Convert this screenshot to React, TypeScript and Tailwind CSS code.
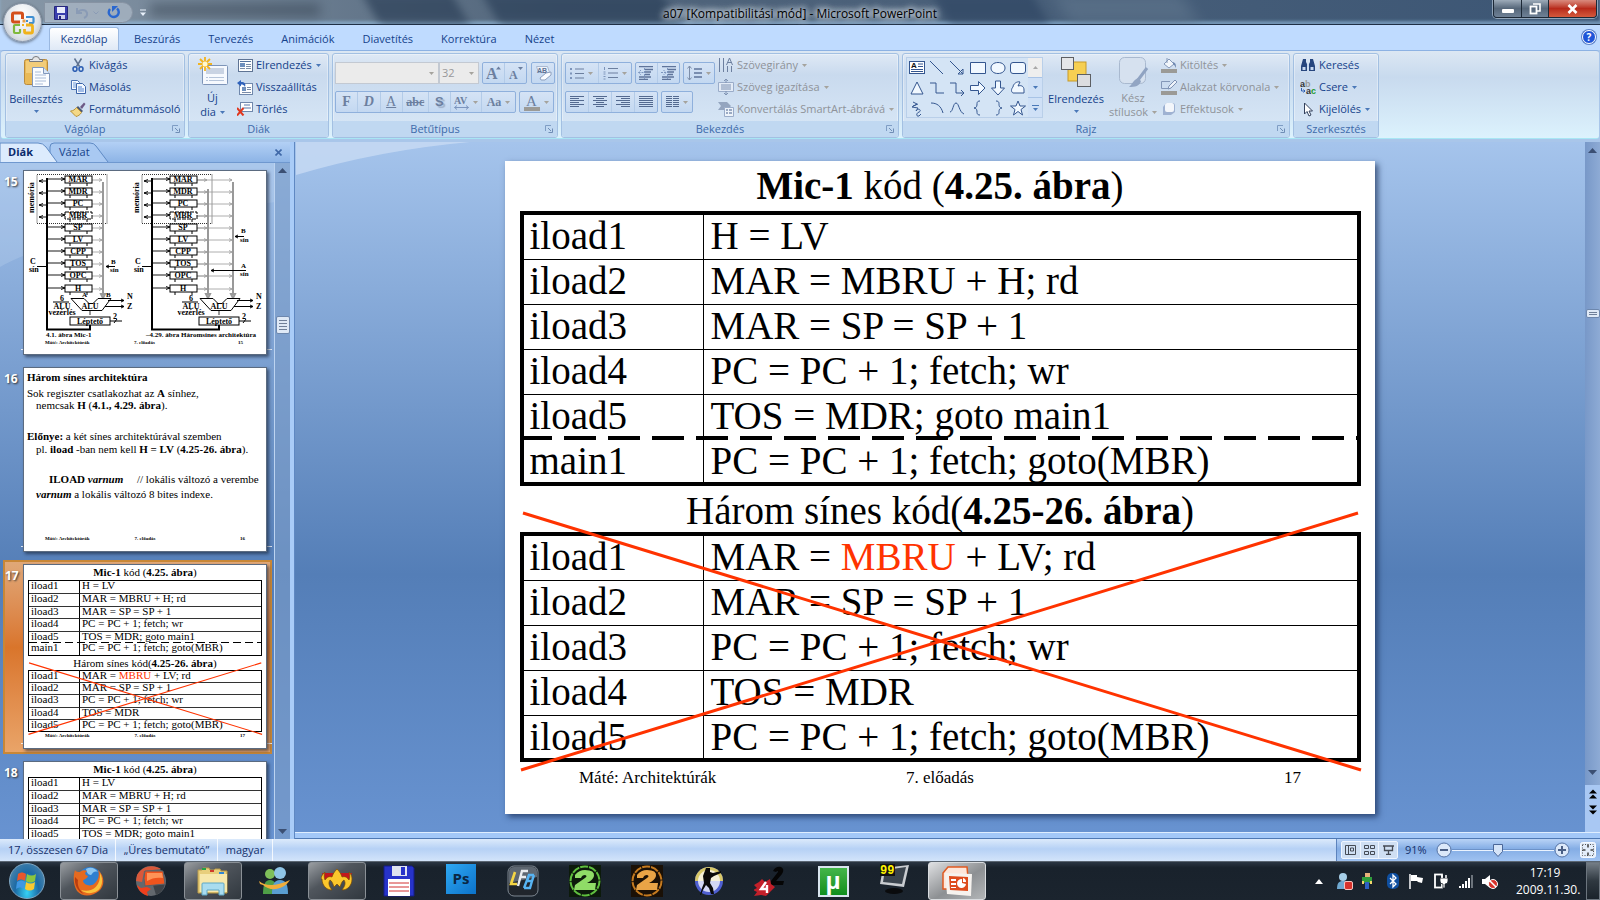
import type { ReactNode } from 'react';

const tabs = ['Beszúrás', 'Tervezés', 'Animációk', 'Diavetítés', 'Korrektúra', 'Nézet'];

const mic1Rows = [
  ['iload1', 'H = LV'],
  ['iload2', 'MAR = MBRU + H; rd'],
  ['iload3', 'MAR = SP = SP + 1'],
  ['iload4', 'PC = PC + 1; fetch; wr'],
  ['iload5', 'TOS = MDR; goto main1'],
  ['main1', 'PC = PC + 1; fetch; goto(MBR)'],
];

const busRows = [
  ['iload1', 'MAR = MBRU + LV; rd'],
  ['iload2', 'MAR = SP = SP + 1'],
  ['iload3', 'PC = PC + 1; fetch; wr'],
  ['iload4', 'TOS = MDR'],
  ['iload5', 'PC = PC + 1; fetch; goto(MBR)'],
];

function Icon({ w = 16, h = 16, children, className = '' }: { w?: number; h?: number; children: ReactNode; className?: string }) {
  return (
    <svg width={w} height={h} viewBox={`0 0 ${w} ${h}`} fill="none" className={`shrink-0 ${className}`} aria-hidden="true">
      {children}
    </svg>
  );
}

function Arrow({ off }: { off?: boolean }) {
  return (
    <Icon w={5} h={3}>
      <path d="M0 0h5L2.5 3z" fill={off ? '#a5a39d' : '#4a78b8'} />
    </Icon>
  );
}

/* ---------- ribbon building blocks ---------- */

function Group({ title, width, launcher, children }: { title: string; width: string; launcher?: boolean; children: ReactNode }) {
  return (
    <section
      aria-label={title}
      className={`${width} shrink-0 h-[85px] flex flex-col rounded-[3px] border border-[#a3c0e2] bg-linear-to-b from-[#dfe9f5] from-0% via-[#c9daee] via-25% to-[#d9e8f7] shadow-[inset_0_0_0_1px_rgba(255,255,255,0.35)] overflow-hidden`}
    >
      <div className="flex-1 min-h-0 flex">{children}</div>
      <div className={`h-4 bg-[#c0d8f1] flex items-center justify-center relative text-[#3e6aaa] ${launcher ? 'pr-5' : ''}`}>
        <span>{title}</span>
        {launcher && (
          <button aria-label={`${title} beállításai`} className="absolute right-1 top-1">
            <Icon w={8} h={8}>
              <path d="M0.5 6V0.5H6" stroke="#7f9dc4" />
              <path d="M3 3l3 3M7.500 3.500v4h-4" stroke="#6f8db5" />
            </Icon>
          </button>
        )}
      </div>
    </section>
  );
}

function Small({ icon, label, arrow, off }: { icon: ReactNode; label: string; arrow?: boolean; off?: boolean }) {
  return (
    <button className={`h-[22px] flex items-center gap-[3px] whitespace-nowrap ${off ? 'text-[#8f9399]' : 'text-[#15428b]'}`}>
      <span className="w-4 flex justify-center">{icon}</span>
      <span className="mr-px">{label}</span>
      {arrow && <Arrow off={off} />}
    </button>
  );
}

function Column({ children, className = '' }: { children: ReactNode; className?: string }) {
  return <div className={`flex flex-col items-start ${className}`}>{children}</div>;
}

function Box({ children, className = '' }: { children: ReactNode; className?: string }) {
  return (
    <div className={`h-[22px] flex items-stretch rounded-[2px] border border-[#8fb0dc] bg-linear-to-b from-[#d5e3f5] to-[#c3d8f1] divide-x divide-[#b3cbe8] ${className}`}>
      {children}
    </div>
  );
}

function Tool({ label, children, className = 'flex-1' }: { label: string; children: ReactNode; className?: string }) {
  return (
    <button aria-label={label} className={`flex items-center justify-center gap-1 text-[#6c7f9f] ${className}`}>
      {children}
    </button>
  );
}

function Lines({ rows, w = 14, color = '#53698f' }: { rows: [number, number][]; w?: number; color?: string }) {
  return (
    <Icon w={w} h={12}>
      {rows.map(([x, len], i) => (
        <path key={i} d={`M${x} ${i * 2 + 0.5}h${len}`} stroke={color} />
      ))}
    </Icon>
  );
}

function ClipboardGroup() {
  return (
    <Group title="Vágólap" width="w-[180px]" launcher>
      <button className="w-[60px] pt-[2px] flex flex-col items-center text-[#15428b]">
        <Icon w={28} h={32}>
          <rect x="2.500" y="3.500" width="23" height="25" rx="2" fill="#e9b957" stroke="#b98a3c" />
          <path d="M4 5h20v12H4z" fill="#f5d488" opacity=".7" />
          <path d="M7.500 5.500V3.500h3a3.500 3 0 0 1 7 0h3v2z" fill="#e6e6e6" stroke="#77797d" />
          <path d="M10.500 11.500h11l6 6v13h-17z" fill="#fbfdff" stroke="#8198bd" />
          <path d="M21.500 11.500v6h6" fill="#dbe7f6" stroke="#8198bd" />
          <path d="M13 16h6M13 19h11M13 22h11M13 25h11M13 28h8" stroke="#a9bcd8" />
        </Icon>
        <span className="mt-1 leading-[14px]">Beillesztés</span>
        <span className="mt-1"><Arrow /></span>
      </button>
      <Column className="ml-1">
        <Small
          label="Kivágás"
          icon={
            <Icon w={12} h={14}>
              <path d="M2.500 0.500l5 8M9.500 0.500l-5 8" stroke="#5f7391" strokeWidth="1.500" />
              <ellipse cx="3" cy="11" rx="2" ry="2.300" stroke="#2e5fb3" strokeWidth="1.600" />
              <ellipse cx="9" cy="11" rx="2" ry="2.300" stroke="#2e5fb3" strokeWidth="1.600" />
            </Icon>
          }
        />
        <Small
          label="Másolás"
          icon={
            <Icon w={16} h={14}>
              <path d="M1.500 0.500h6l2 2v7h-8z" fill="#f4f9ff" stroke="#4b73b5" />
              <path d="M3 3h3M3 5h5M3 7h5" stroke="#6f98d8" />
              <path d="M6.500 3.500h6l3 3v7h-9z" fill="#f4f9ff" stroke="#3a63a8" />
              <path d="M8 7h4M8 9h6M8 11h6" stroke="#4f80cf" />
            </Icon>
          }
        />
        <Small
          label="Formátummásoló"
          icon={
            <Icon w={16} h={15}>
              <path d="M10 5l4-4.500 1.500 1.500-3.500 5z" fill="#6d5a86" />
              <path d="M8 4l5 5-1.500 1.500-5-5z" fill="#4c5a78" />
              <path d="M6.500 5.500l5 5C10 13 8 14 6 14.500L0.500 9C3 9 5 7.500 6.500 5.500z" fill="#f4d886" stroke="#b89239" />
            </Icon>
          }
        />
      </Column>
    </Group>
  );
}

function SlidesGroup() {
  return (
    <Group title="Diák" width="w-[141px]">
      <button className="ml-px w-[45px] pt-[2px] flex flex-col items-center text-[#15428b]">
        <Icon w={32} h={32}>
          <rect x="5.500" y="9.500" width="25" height="19" rx="1" fill="#f6f9fe" stroke="#7d94b8" />
          <rect x="9" y="12" width="18" height="6" fill="#c9d3e3" />
          <path d="M9 21.500h18M9 24.500h18" stroke="#b5c4da" strokeDasharray="2 1 15 0" />
          <path d="M8 1v14M1 8h14M3 3l10 10M13 3L3 13" stroke="#f2b31f" strokeWidth="1.800" />
          <circle cx="8" cy="8" r="2.500" fill="#fff8cf" />
        </Icon>
        <span className="mt-[3px] leading-[14px]">Új</span>
        <span className="leading-[14px] flex items-center gap-1">dia <Arrow /></span>
      </button>
      <Column className="ml-[2px]">
        <Small
          label="Elrendezés"
          arrow
          icon={
            <Icon w={15} h={13}>
              <rect x=".5" y=".5" width="14" height="12" fill="#fdfeff" stroke="#5f7494" />
              <path d="M2 2.500h11" stroke="#54729f" />
              <rect x="2" y="4" width="5" height="4" fill="#6e8fbd" />
              <path d="M8 5.500h5M8 7.500h5M2 9.500h5M8 9.500h5" stroke="#7a8ca8" />
            </Icon>
          }
        />
        <Small
          label="Visszaállítás"
          icon={
            <Icon w={16} h={15}>
              <rect x="2.500" y="3.500" width="13" height="11" fill="#fdfeff" stroke="#7088ac" />
              <rect x="5" y="7" width="4" height="4" fill="#6e8fbd" />
              <path d="M10 7.500h4M10 9.500h4M5 12.500h9" stroke="#7a8ca8" />
              <path d="M0 3l4-3v2c4 0 5 2 4 5-1-2-2-2.500-4-2.500V6.500z" fill="#2f62bb" />
            </Icon>
          }
        />
        <Small
          label="Törlés"
          icon={
            <Icon w={16} h={14}>
              <rect x="3.500" y=".5" width="12" height="9" fill="#fdfeff" stroke="#7088ac" />
              <path d="M7 3h6M6 6h8" stroke="#8fa4c6" strokeWidth="1.500" />
              <path d="M0 6l6.500 7.500M6.500 6L0 13.500" stroke="#e0371e" strokeWidth="2" />
            </Icon>
          }
        />
      </Column>
    </Group>
  );
}

function FontGroup() {
  return (
    <Group title="Betűtípus" width="w-[226px]" launcher>
      <div className="flex flex-col pl-[2px] pt-2 gap-[7px] w-full">
        <div className="flex">
          <div className="w-[104px] h-[22px] bg-[#ebebeb] border border-[#c3c9d2] flex items-center">
            <input aria-label="Betűtípus neve" className="w-full min-w-0 bg-transparent" />
            <span className="mr-1"><Arrow off /></span>
          </div>
          <div className="w-10 h-[22px] bg-[#ebebeb] border border-[#c3c9d2] flex items-center">
            <input aria-label="Betűméret" defaultValue="32" className="w-full min-w-0 bg-transparent pl-[2px] text-[#98989a]" />
            <span className="mr-1"><Arrow off /></span>
          </div>
          <Box className="ml-[3px] w-[45px]">
            <Tool label="Betűméret növelése">
              <Icon w={16} h={16}>
                <text x="0" y="14" fontSize="16" fontWeight="700" fill="#6c7f9f" fontFamily="Liberation Serif">A</text>
                <path d="M10 4.500h5l-2.500-3z" fill="#6c7f9f" />
              </Icon>
            </Tool>
            <Tool label="Betűméret csökkentése">
              <Icon w={14} h={16}>
                <text x="0" y="14" fontSize="12" fontWeight="700" fill="#6c7f9f" fontFamily="Liberation Serif">A</text>
                <path d="M9 2h5l-2.500 3z" fill="#6c7f9f" />
              </Icon>
            </Tool>
          </Box>
          <Box className="ml-1 w-6">
            <Tool label="Formázás törlése">
              <Icon w={17} h={16}>
                <path d="M1.500 1.500h11l2 6h-11z" fill="#eef3fa" stroke="#a9b9d2" />
                <text x="2" y="8" fontSize="7" fontWeight="700" fill="#5d7192" fontFamily="Liberation Sans">AB</text>
                <path d="M5 13l6-5 5-1v3l-6 5H6z" fill="#fafcff" stroke="#8c9fbe" />
              </Icon>
            </Tool>
          </Box>
        </div>
        <div className="flex font-['Liberation_Serif',serif] text-[14px]">
          <Box className="w-[181px]">
            <Tool label="Félkövér"><b>F</b></Tool>
            <Tool label="Dőlt"><i className="font-bold">D</i></Tool>
            <Tool label="Aláhúzott"><u>A</u></Tool>
            <Tool label="Áthúzott" className="w-[26px]"><s className="text-[12px] font-bold">abc</s></Tool>
            <Tool label="Árnyék"><b className="font-['Liberation_Sans',sans-serif] text-[13px] [text-shadow:2px_2px_1px_#9fb0ca]">S</b></Tool>
            <Tool label="Betűköz" className="w-[31px]">
              <Icon w={15} h={15}>
                <text x="0" y="9" fontSize="10" fontWeight="700" fill="#6c7f9f" fontFamily="Liberation Serif">AV</text>
                <path d="M0.500 12.500h14M3 10.500l-2.500 2 2.500 2M12 10.500l2.500 2-2.500 2" stroke="#7d96bf" />
              </Icon>
              <Arrow off />
            </Tool>
            <Tool label="Kis- és nagybetű" className="w-[33px]"><b className="text-[12px]">Aa</b><Arrow off /></Tool>
          </Box>
          <Box className="ml-[3px] w-[35px]">
            <Tool label="Betűszín">
              <Icon w={16} h={17}>
                <text x="2" y="12" fontSize="15" fill="#6c7f9f" fontFamily="Liberation Serif">A</text>
                <rect y="13" width="16" height="4" fill="#9b9a96" />
              </Icon>
              <Arrow off />
            </Tool>
          </Box>
        </div>
      </div>
    </Group>
  );
}

function ParagraphGroup() {
  const full: [number, number][] = [[0, 14], [0, 14], [0, 14], [0, 14], [0, 14], [0, 14]];
  return (
    <Group title="Bekezdés" width="w-[338px]" launcher>
      <div className="flex flex-col pl-[3px] pt-2 gap-[7px] w-[153px]">
        <div className="flex gap-[3px]">
          <Box className="w-[67px]">
            <Tool label="Felsorolás">
              <Icon w={14} h={13}>
                <path d="M5 2h9M5 6.500h9M5 11h9" stroke="#6c7f9f" />
                <path d="M0 2h2M0 6.500h2M0 11h2" stroke="#7d94ba" strokeWidth="2" />
              </Icon>
              <Arrow off />
            </Tool>
            <Tool label="Számozás">
              <Icon w={15} h={14}>
                <path d="M5 2.500h10M5 7h10M5 11.500h10" stroke="#6c7f9f" />
                <path d="M1.500 1v3M0.500 6h2M0.500 8h2M0.500 10.500h2M0.500 13h2" stroke="#7d94ba" />
              </Icon>
              <Arrow off />
            </Tool>
          </Box>
          <Box className="w-[46px]">
            <Tool label="Behúzás csökkentése">
              <Icon w={16} h={14}>
                <path d="M1 .5h14M7 3.500h8M7 6h6M7 8.500h5M1 11h12M1 13.500h9" stroke="#5f749a" strokeWidth="1.300" />
                <path d="M5.500 6.500h-5M3 4L.5 6.500 3 9M6.500 2v12" stroke="#7d96bf" strokeDasharray="2 1" />
              </Icon>
            </Tool>
            <Tool label="Behúzás növelése">
              <Icon w={16} h={14}>
                <path d="M1 .5h14M7 3.500h8M7 6h6M7 8.500h5M1 11h12M1 13.500h9" stroke="#5f749a" strokeWidth="1.300" />
                <path d="M0 6.500h5M2.500 4L5 6.500 2.500 9M6.500 2v12" stroke="#7d96bf" strokeDasharray="2 1" />
              </Icon>
            </Tool>
          </Box>
          <Box className="w-8">
            <Tool label="Sorköz">
              <Icon w={15} h={16}>
                <path d="M2.500 1v14M.5 3.500L2.500 1l2 2.500M.5 12.500L2.500 15l2-2.500" stroke="#7d8ea9" />
                <path d="M7 4h8M7 8h8M7 12h8" stroke="#5f749a" strokeWidth="1.300" />
              </Icon>
              <Arrow off />
            </Tool>
          </Box>
        </div>
        <div className="flex gap-[3px]">
          <Box className="w-[93px]">
            <Tool label="Balra zárás"><Lines rows={[[0, 14], [0, 9], [0, 14], [0, 9], [0, 14], [0, 9]]} /></Tool>
            <Tool label="Középre zárás"><Lines rows={[[0, 14], [3, 8], [0, 14], [3, 8], [0, 14], [3, 8]]} /></Tool>
            <Tool label="Jobbra zárás"><Lines rows={[[0, 14], [5, 9], [0, 14], [5, 9], [0, 14], [5, 9]]} /></Tool>
            <Tool label="Sorkizárás"><Lines rows={full} /></Tool>
          </Box>
          <Box className="w-8">
            <Tool label="Oszlopok">
              <span className="flex gap-px">
                <Lines w={6} rows={[[0, 6], [0, 6], [0, 6], [0, 6], [0, 6], [0, 6]]} />
                <Lines w={6} rows={[[0, 6], [0, 6], [0, 6], [0, 6], [0, 6], [0, 6]]} />
              </span>
              <Arrow off />
            </Tool>
          </Box>
        </div>
      </div>
      <Column className="ml-[3px]">
        <Small
          off
          arrow
          label="Szövegirány"
          icon={
            <Icon w={16} h={16}>
              <path d="M1.500 1v14M5.500 1v14M9.500 9v6M13.500 9v6" stroke="#6c7f9f" />
              <path d="M8.500 8l3-7 3 7M9.500 5.500h4" stroke="#6c7f9f" />
            </Icon>
          }
        />
        <Small
          off
          arrow
          label="Szöveg igazítása"
          icon={
            <Icon w={16} h={16}>
              <path d="M.5 3.500h15v9H.5z" fill="#e3ebf6" stroke="#9aacc9" />
              <path d="M3 6h10M3 8h10M3 10h10M8 0v4M8 12v4" stroke="#7f92b2" />
              <path d="M6 2l2-2 2 2M6 14l2 2 2-2" stroke="#7f92b2" />
            </Icon>
          }
        />
        <Small
          off
          arrow
          label="Konvertálás SmartArt-ábrává"
          icon={
            <Icon w={16} h={16}>
              <path d="M0 1h9l4 4-4 4H0l3-4z" fill="#94a5bf" />
              <path d="M6.500 6.500h9v9h-9z" fill="#edf3fa" stroke="#9aacc9" />
              <path d="M8 9h2M8 12h2M11 9h3M11 12h3" stroke="#7f92b2" strokeWidth="1.400" />
            </Icon>
          }
        />
      </Column>
    </Group>
  );
}

const shapePaths = [
  'M11 6h5M11 8.500h5M4 11.500h12M4 13.500h12',
  'M3 3l13 13',
  'M3 3l13 13M16 11v5h-5z',
  'M2.500 4.500h15v11h-15z',
  'M10 4.500c4.500 0 7 2.500 7 5.500s-2.500 5.500-7 5.500-7-2.500-7-5.500 2.500-5.500 7-5.500z',
  'M5 4.500h10q2.500 0 2.500 2.500v6q0 2.500-2.500 2.500H5q-2.500 0-2.500-2.500V7q0-2.500 2.500-2.500z',
  'M10 4l6 12H4z',
  'M3 5h6v10h8',
  'M3 5h6v10h7M14 12l3 3-3 3',
  'M2.500 7.500h8v-4l6.500 6.500-6.500 6.500v-4h-8z',
  'M7.500 3h5v7h4L10 17l-6.500-7h4z',
  'M5 9c0-3 4-6 7-5l-2 4c3-1 6 0 6 4v3H5c-2-1-2-4 0-6z',
  'M6 4l4 2-5 3 6 1-2 3M9 13c3-4 6 0 3 1s-3 5 0 4l2-2M6 8l5-2',
  'M4 5c6 0 10 3 12 10',
  'M3 14c3 0 3-9 6-9s3 9 8 11',
  'M12 3c-3 0-3 2-3 3s0 4-3 4c3 0 3 3 3 4s0 3 3 3',
  'M8 3c3 0 3 2 3 3s0 4 3 4c-3 0-3 3-3 4s0 3-3 3',
  'M10 3l2 5h5.500l-4.500 3.500 1.500 5.500-4.500-3.500L5.500 17 7 11.500 2.500 8H8z',
];
const filledShapes = [3, 4, 5, 6, 9, 10, 11, 17];

function DrawingGroup() {
  return (
    <Group title="Rajz" width="w-[388px]" launcher>
      <div className="ml-[3px] mt-[3px] h-[61px] w-[137px] border border-[#b9cfe9] bg-[#d4e4f5] flex">
        <div className="grid grid-cols-6 flex-1">
          {shapePaths.map((d, i) => (
            <button key={i} aria-label={`Alakzat ${i + 1}`} className="flex items-center justify-center">
              <Icon w={20} h={20}>
                {i === 0 && <rect x="2.500" y="3.500" width="15" height="12" fill="#fff" stroke="#34568f" />}
                <path d={d} stroke="#34568f" fill={filledShapes.includes(i) ? '#f1f8ff' : 'none'} />
                {i === 0 && <text x="4" y="10" fontSize="8" fontWeight="700" fill="#111" fontFamily="Liberation Sans">A</text>}
              </Icon>
            </button>
          ))}
        </div>
        <div className="w-[14px] flex flex-col divide-y divide-[#a8c3e6]">
          <button aria-label="Előző sor" className="flex-1 flex items-center justify-center bg-[#eeeeee]"><Icon w={5} h={3}><path d="M0 3h5L2.500 0z" fill="#a8a8a8" /></Icon></button>
          <button aria-label="Következő sor" className="flex-1 flex items-center justify-center bg-[#cfe0f6]"><Arrow /></button>
          <button aria-label="Továbbiak" className="flex-1 flex flex-col gap-[2px] items-center justify-center bg-[#cfe0f6]"><span className="w-[7px] h-px bg-[#4a78b8]" /><Arrow /></button>
        </div>
      </div>
      <button className="w-[60px] ml-[3px] pt-[2px] flex flex-col items-center text-[#15428b]">
        <Icon w={32} h={32}>
          <rect x="8" y="6" width="18" height="19" fill="#f6cf52" stroke="#c79a29" />
          <rect x="1.500" y="1.500" width="12" height="12" fill="#e5e6e8" stroke="#5d5f63" />
          <rect x="17.500" y="18.500" width="13" height="12" fill="#dcdde0" stroke="#5d5f63" />
        </Icon>
        <span className="mt-1 leading-[14px]">Elrendezés</span>
        <span className="mt-1"><Arrow /></span>
      </button>
      <button className="w-[54px] pt-[2px] flex flex-col items-center text-[#8f9399]">
        <Icon w={32} h={32}>
          <rect x="2.500" y="1.500" width="26" height="26" rx="5" fill="#d6e1ef" stroke="#a9b9cf" />
          <path d="M30 12l-9 12" stroke="#8fa3c2" strokeWidth="3" />
          <path d="M21 22l3 3c-1 5-6 6-12 6 3-2 4-7 9-9z" fill="#92a5c3" />
        </Icon>
        <span className="mt-[3px] leading-[14px]">Kész</span>
        <span className="leading-[14px] flex items-center gap-1">stílusok <Arrow off /></span>
      </button>
      <Column className="ml-px">
        <Small
          off
          arrow
          label="Kitöltés"
          icon={
            <Icon w={16} h={16}>
              <path d="M3 7l5-5 5 5-5 4z" fill="#f2f6fb" stroke="#8498b8" />
              <path d="M12 5c3 1 3 3 3 6-1-1-1-3-3-4z" fill="#6f88b0" />
              <path d="M6 1v5" stroke="#8498b8" />
              <rect y="12" width="16" height="4" fill="#9b9a96" />
            </Icon>
          }
        />
        <Small
          off
          arrow
          label="Alakzat körvonala"
          icon={
            <Icon w={16} h={16}>
              <path d="M9 2.500H.5v7h9" stroke="#8498b8" />
              <path d="M14 1l-6 6-1 3 3-1 6-6z" fill="#eef3fa" stroke="#7d92b4" />
              <rect y="12" width="16" height="4" fill="#9b9a96" />
            </Icon>
          }
        />
        <Small
          off
          arrow
          label="Effektusok"
          icon={
            <Icon w={16} h={16}>
              <path d="M2 6l3-4h8l1 2v7l-4 3H2z" fill="#9fb2d2" />
              <rect x="4" y="2" width="9" height="9" rx="2" fill="#f3f6fb" />
            </Icon>
          }
        />
      </Column>
    </Group>
  );
}

function EditingGroup() {
  return (
    <Group title="Szerkesztés" width="w-[86px]">
      <Column className="ml-[6px]">
        <Small
          label="Keresés"
          icon={
            <Icon w={16} h={14}>
              <path d="M3 1h3v3l1 2v7H1V8zM10 1h3l2 7v5H9V6l1-2z" fill="#27467e" />
              <path d="M7 6h2v3H7zM2.500 9h3v3h-3zM10.500 9h3v3h-3z" fill="#c7d8f0" />
            </Icon>
          }
        />
        <Small
          arrow
          label="Csere"
          icon={
            <Icon w={16} h={16}>
              <text x="0" y="8" fontSize="9" fontWeight="700" fill="#333" fontFamily="Liberation Sans">a<tspan fill="#9a9a9a">b</tspan></text>
              <text x="6" y="15" fontSize="9" fontWeight="700" fill="#333" fontFamily="Liberation Sans">a<tspan fill="#1f9a2d">c</tspan></text>
              <path d="M1.500 9v3H5M3.500 10.500L5 12l-1.500 1.500" stroke="#2e5fb3" />
            </Icon>
          }
        />
        <Small
          arrow
          label="Kijelölés"
          icon={
            <Icon w={10} h={15}>
              <path d="M1.500 1v11l2.500-2.500L6 14l2-1-2-4h3.500z" fill="#fff" stroke="#33415c" />
            </Icon>
          }
        />
      </Column>
    </Group>
  );
}

/* ---------- title bar, tabs ---------- */

function TitleBar() {
  return (
    <header className="h-[25px] relative flex items-start bg-linear-to-r from-[#8898a8] via-[#51657b] via-35% to-[#3c5675] border-b border-[#1f2f45] shadow-[inset_0_-3px_3px_rgba(150,190,225,0.6)]">
      <div className="absolute inset-0 overflow-hidden">
        <div className="absolute left-[150px] top-1 w-[170px] h-3 bg-[#2e3b49] blur-[6px] opacity-50" />
        <div className="absolute left-[370px] -top-2 w-[90px] h-8 bg-[#2c4058] blur-[5px] skew-x-[30deg] opacity-70" />
        <div className="absolute left-[490px] -top-2 w-[180px] h-8 bg-[#2b4059] blur-[5px] skew-x-[30deg] opacity-70" />
        <div className="absolute left-[940px] -top-2 w-[100px] h-8 bg-[#2b4260] blur-[5px] skew-x-[30deg] opacity-60" />
        <div className="absolute left-[1060px] -top-2 w-[130px] h-8 bg-[#62788f] blur-[8px] skew-x-[30deg] opacity-60" />
      </div>
      <div className="relative ml-11 mt-[2px] h-[21px] w-[89px] rounded-r-full border border-[#8793a3] bg-[#b6c1ce]/60 flex items-center pl-[9px]">
        <button aria-label="Mentés">
          <Icon w={14} h={14}>
            <path d="M.5.5h13v13H.5z" fill="#3b3fae" stroke="#26267b" />
            <rect x="3" y="1" width="8" height="6" fill="#e9ecfb" />
            <rect x="4" y="9" width="7" height="4" fill="#cfd2ec" />
            <rect x="5" y="10" width="2" height="3" fill="#26267b" />
          </Icon>
        </button>
        <button aria-label="Visszavonás" className="ml-2 flex items-center gap-1">
          <Icon w={13} h={12}>
            <path d="M1 1v5h5M1.500 5.500C4 2 10 2 11 6c.5 2-1 4-3 5" stroke="#8a9bb5" strokeWidth="2" />
          </Icon>
          <Icon w={6} h={4}><path d="M.5.5L3 3 5.500.5" stroke="#8a9bb5" /></Icon>
        </button>
        <button aria-label="Ismétlés" className="ml-2">
          <Icon w={13} h={13}>
            <path d="M3 3c-3 4 0 8 4 8 5-.5 6-6 3-8.500" stroke="#2a67cf" strokeWidth="2.400" />
            <path d="M5 6V0h6z" fill="#2a67cf" />
          </Icon>
        </button>
      </div>
      <button aria-label="Gyorselérési eszköztár testreszabása" className="relative ml-[7px] mt-[9px]">
        <Icon w={6} h={7}>
          <path d="M0 1h6" stroke="#e8f0fa" />
          <path d="M0 3.500h6L3 7z" fill="#e8f0fa" />
        </Icon>
      </button>
      <h1 className="absolute inset-x-0 top-[5px] text-center text-[12px] leading-[17px] text-black [text-shadow:0_0_6px_#e8eef5,0_0_6px_#e8eef5,0_0_10px_#dfe7f0]">
        a07 [Kompatibilitási mód] - Microsoft PowerPoint
      </h1>
      <div className="relative ml-auto mr-[3px] h-[18px] flex rounded-b-[4px] border border-t-0 border-[#1c2836] overflow-hidden divide-x divide-[#1c2836] shadow-[0_0_0_1px_rgba(200,215,230,0.6)]">
        <button aria-label="Kis méret" className="w-7 flex items-center justify-center bg-linear-to-b from-[#9dabb9] via-[#56677a] via-50% to-[#6f8196]">
          <span className="mt-1 w-3 h-1 bg-white rounded-[1px]" />
        </button>
        <button aria-label="Előző méret" className="w-[27px] flex items-center justify-center bg-linear-to-b from-[#9dabb9] via-[#56677a] via-50% to-[#6f8196]">
          <Icon w={12} h={12}>
            <path d="M4 1h7v7H8" stroke="#fff" strokeWidth="1.600" />
            <rect x="1.500" y="3.500" width="6" height="7" stroke="#fff" strokeWidth="1.800" />
          </Icon>
        </button>
        <button aria-label="Bezárás" className="w-[47px] flex items-center justify-center bg-linear-to-b from-[#d98a7e] via-[#b8291a] via-50% to-[#d5593c]">
          <Icon w={11} h={10}>
            <path d="M1.500 1l8 8M9.500 1l-8 8" stroke="#fff" strokeWidth="2.600" />
          </Icon>
        </button>
      </div>
      <button aria-label="Office gomb" className="absolute left-[3px] top-[3px] z-10 size-[39px] rounded-full border border-[#8b97a8] bg-radial-[at_50%_30%] from-white via-[#dfe4ea] via-60% to-[#a9b2be] flex items-center justify-center shadow-[0_1px_3px_rgba(0,0,0,0.5)]">
        <Icon w={26} h={26}>
          <path d="M10 12H4q-1.500 0-1.500-1.500v-6Q2.500 3 4 3h7q1.500 0 1.500 1.500V9" stroke="#d4501c" strokeWidth="3" />
          <path d="M16 7h6.500q1 0 1 1v4q0 1-1 1H19" stroke="#3f8fd2" strokeWidth="2.200" />
          <path d="M10 15H5q-1 0-1 1v6q0 1 1 1h4q1 0 1-1v-3" stroke="#7fb93c" strokeWidth="2.200" />
          <path d="M16 15h5q1.500 0 1.500 1.500v5q0 1.500-1.500 1.500h-5q-1.500 0-1.500-1.500V19" stroke="#f0b21c" strokeWidth="2.800" />
          <path d="M12.500 9.500h3v3h-3z" fill="#e8a04a" /><path d="M16 10h2v2h-2z" fill="#3f8fd2" /><path d="M12 14h2v2h-2z" fill="#f0b21c" />
        </Icon>
      </button>
    </header>
  );
}

function RibbonTabs() {
  return (
    <nav className="h-[25px] bg-[#bfdbff] flex items-end pl-[49px] pr-1 text-[#15428b]">
      <a href="#kezdolap" className="h-[23px] w-[70px] flex items-center justify-center rounded-t-[3px] border border-b-0 border-[#9ab8e0] bg-linear-to-b from-white to-[#dfe9f6]">Kezdőlap</a>
      {tabs.map((t) => (
        <a key={t} href="#lap" className="h-[23px] ml-[2px] px-[13px] flex items-center">{t}</a>
      ))}
      <button aria-label="Súgó" className="ml-auto mb-[6px] size-[14px] rounded-full border border-white bg-[#1f55d8] text-white font-bold text-[10px] leading-none shadow-[0_0_0_1px_#5d82c9]">?</button>
    </nav>
  );
}

/* ---------- slides ---------- */

function highlight(text: string) {
  const [before, after] = text.split('MBRU');
  return <>{before}<span className="text-[#ff3300]">MBRU</span>{after}</>;
}

function CodeTable({ rows, small, dashed, red, label }: { rows: string[][]; small?: boolean; dashed?: boolean; red?: boolean; label: string }) {
  const last = rows.length - 1;
  return (
    <table
      aria-label={label}
      className={`border-separate border-spacing-0 table-fixed border-black ${small ? 'w-[234px] mx-auto border leading-[9px]' : 'w-[841px] mx-auto border-4 leading-[41px]'} ${small ? (dashed ? 'h-[76px]' : 'h-[62px]') : ''}`}
    >
      <tbody>
        {rows.map(([name, code], i) => {
          const dash = dashed && i === last - 1;
          const line = i === last || dash ? '' : small ? 'border-b border-[#333]' : 'border-b border-black';
          const height = small ? '' : i === last ? 'h-[42px]' : 'h-[45px]';
          return (
            <tr
              key={name}
              className={
                dash
                  ? small
                    ? 'bg-[repeating-linear-gradient(90deg,#000_0_8px,transparent_8px_12px)] bg-[length:100%_1px] bg-bottom bg-no-repeat'
                    : 'bg-[repeating-linear-gradient(90deg,#000_0_28px,transparent_28px_40px,#000_40px_44px)] bg-[length:100%_4px] bg-bottom bg-no-repeat'
                  : ''
              }
            >
              <td className={`align-top p-0 border-r border-r-black whitespace-nowrap ${small ? 'w-[51px] pl-[2px]' : 'w-[180px] pl-[6px]'} ${height} ${line}`}>{name}</td>
              <td className={`align-top p-0 whitespace-nowrap ${small ? 'pl-[2px]' : 'pl-[7px]'} ${height} ${line}`}>{red && i === 0 ? highlight(code) : code}</td>
            </tr>
          );
        })}
      </tbody>
    </table>
  );
}

function SlideFooter({ page, small }: { page: number; small?: boolean }) {
  return (
    <div className={`grid grid-cols-3 ${small ? 'px-[21px] text-[5px] leading-[8px] font-bold' : 'mt-1 px-[74px] text-[17px] leading-6'}`}>
      <span className="whitespace-nowrap">Máté: Architektúrák</span>
      <span className="text-center">7. előadás</span>
      <span className="text-right">{page}</span>
    </div>
  );
}

function CodeSlide({ page, small }: { page: number; small?: boolean }) {
  return (
    <div className={`relative font-['Liberation_Serif',serif] text-black ${small ? 'text-[11px]' : 'text-[39px]'}`}>
      <h2 className={`text-center ${small ? 'leading-[15px]' : 'leading-[50px]'}`}><b>Mic-1</b> kód (<b>4.25. ábra</b>)</h2>
      <CodeTable rows={mic1Rows} small={small} dashed label="Mic-1 kód" />
      <h2 className={`text-center ${small ? 'leading-[14px]' : 'leading-[42px] pt-1'}`}>Három sínes kód(<b>4.25-26. ábra</b>)</h2>
      <CodeTable rows={busRows} small={small} red label="Három sínes kód" />
      <SlideFooter page={page} small={small} />
      <svg viewBox="0 0 870 653" className="absolute top-0 left-0 w-full pointer-events-none" fill="none" stroke="#ff3300" strokeWidth={small ? 4 : 3} aria-hidden="true">
        <path d="M18 352L856 609M853 352L16 609" />
      </svg>
    </div>
  );
}

function TextSlide() {
  return (
    <div className="font-['Liberation_Serif',serif] text-black text-[11px] leading-[12px] pl-[3px] pt-[3px] whitespace-nowrap">
      <h2 className="font-bold">Három sínes architektúra</h2>
      <p className="mt-1">Sok regiszter csatlakozhat az <b>A</b> sínhez,</p>
      <p className="pl-[9px]">nemcsak <b>H</b> (<b>4.1., 4.29. ábra</b>).</p>
      <p className="mt-[19px]"><b>Előnye:</b> a két sínes architektúrával szemben</p>
      <p className="pl-[9px] mt-px">pl. <b>iload</b> -ban nem kell <b>H = LV</b> (<b>4.25-26. ábra</b>).</p>
      <p className="pl-[22px] mt-[18px] flex"><span className="w-[88px]"><b>ILOAD <i>varnum</i></b></span>// lokális változó a verembe</p>
      <p className="pl-[9px] mt-[3px]"><b><i>varnum</i></b> a lokális változó 8 bites indexe.</p>
      <div className="mt-[35px] -ml-[3px]"><SlideFooter page={16} small /></div>
    </div>
  );
}

const registers: [string, number][] = [
  ['MAR', 5], ['MDR', 17], ['PC', 29], ['MBR', 41], ['SP', 53], ['LV', 65], ['CPP', 77], ['TOS', 89], ['OPC', 101], ['H', 114],
];

// One data path: registers, C bus on the left, ALU and shifter below.
function DataPath({ x, aluX, buses }: { x: number; aluX: number; buses: number[] }) {
  return (
    <g>
      <rect x={x - 28} y="3.500" width="70" height="49" stroke="#000" strokeWidth=".8" strokeDasharray="1 1" />
      {buses.map((b, i) => (
        <path key={b} d={`M${b} ${buses.length > 1 && i === 0 ? 18 : 11}V124M${b - 2} 123h4l-2 4z`} stroke="#999" strokeWidth="2" />
      ))}
      <path d={`M${x - 18} 7V158.500H${aluX + 19}V153`} stroke="#000" strokeWidth="2" />
      {registers.map(([name, y], i) => (
        <g key={name}>
          {buses.map((b) => <path key={b} d={`M${x + 27} ${y + 4}H${b - 1}M${b - 4} ${y + 2.500}l3 1.500-3 1.500`} stroke="#999" strokeWidth=".8" />)}
          <path d={`M${x - 18} ${y + 3}H${x}M${x - 4} ${y + 1.500}l4 1.500-4 1.500`} stroke="#000" strokeWidth=".9" />
          {i < 4 && <path d={`M${x - 26} ${y + 5}h8M${x - 22} ${y + 3.500}l-4 1.500 4 1.500`} stroke="#000" strokeWidth=".9" />}
          <path d={`M${x + 5} ${y + 7}v3M${x + 22} ${y + 7}v3`} stroke="#000" />
          <rect x={x} y={y} width="27" height="7" fill="#fff" stroke="#000" strokeDasharray={name === 'MBR' ? '4 1' : undefined} />
          <text x={x + 13} y={y + 6} textAnchor="middle">{name}</text>
        </g>
      ))}
      <path d={`M${aluX} 127.500h13l5 5h4l5-5h13l-9 12h-20z`} fill="#fff" stroke="#000" />
      <text x={aluX + 19} y="138" textAnchor="middle">ALU</text>
      <path d={`M${aluX + 37} 129.500h16M${aluX + 34} 135.500h19M${aluX + 50} 128l3 1.500-3 1.500M${aluX + 50} 134l3 1.500-3 1.500M${aluX - 18} 131h16`} stroke="#000" />
      <path d={`M${aluX + 19} 140v4`} stroke="#999" strokeWidth="2" />
      <rect x={aluX - 1} y="146" width="40" height="8" fill="#fff" stroke="#000" />
      <text x={aluX + 19} y="152.500" textAnchor="middle">Léptető</text>
      <path d={`M${aluX + 39} 150h12M${aluX + 43} 152l3-4`} stroke="#000" />
      <text x={aluX + 42} y="148">2</text>
      <text x={aluX - 11} y="130">6</text>
      <text x={aluX - 9} y="138" textAnchor="middle">ALU</text>
      <text x={aluX - 9} y="144" textAnchor="middle">vezérlés</text>
      <text x={aluX + 56} y="128">N</text>
      <text x={aluX + 56} y="138">Z</text>
      <text x={x - 35} y="93">C</text>
      <text x={x - 36} y="101">sín</text>
      <path d={`M${x - 28} 95.500h9`} stroke="#000" />
      <text transform={`translate(${x - 31} 42) rotate(-90)`}>memória</text>
    </g>
  );
}

function DiagramSlide() {
  return (
    <svg viewBox="0 0 242 183" className="w-full block" fill="none" fontFamily="Liberation Serif" fontWeight="700" fontSize="7" aria-label="Mic-1 és háromsínes architektúra">
      <g fontSize="8">
        <DataPath x={41} aluX={47} buses={[79]} />
        <DataPath x={146} aluX={176} buses={[184, 209]} />
      </g>
      <path d="M82 95.500h9M211 65.500h9M187 99.500h35M85 94l-3 1.500 3 1.500M214 64l-3 1.500 3 1.500M190 98l-3 1.500 3 1.500" stroke="#000" />
      <g fill="#000">
        <text x="87" y="93">B</text><text x="86" y="101">sín</text>
        <text x="217" y="62">B</text><text x="216" y="71">sín</text>
        <text x="217" y="97">A</text><text x="216" y="105">sín</text>
        <text x="58" y="126">A</text><text x="82" y="126">B</text>
        <text x="22" y="166">4.1. ábra Mic-1</text>
        <text x="122" y="166">–4.29. ábra Háromsínes architektúra</text>
        <text x="21" y="173" fontSize="5">Máté: Architektúrák</text>
        <text x="110" y="173" fontSize="5">7. előadás</text>
        <text x="214" y="173" fontSize="5">15</text>
      </g>
    </svg>
  );
}

function Thumb({ n, selected, children }: { n: number; selected?: boolean; children: ReactNode }) {
  return (
    <li
      className={`h-[194px] w-[269px] shrink-0 flex pl-0 ${
        selected ? 'border-2 py-[3px] border-[#c98736] bg-linear-to-b from-[#e0a878] via-[#d9752b] via-45% to-[#e9a468]' : 'border border-transparent py-1'
      }`}
    >
      <span className={`${selected ? 'w-[19px]' : 'w-5'} shrink-0 pt-[3px] text-[12px] leading-[15px] font-bold text-white [text-shadow:1px_1px_2px_#333]`}>{n}</span>
      <button aria-label={`${n}. dia`} className="relative h-[183px] w-[242px] shrink-0 text-left font-normal">
        <span className="absolute -left-[3px] -right-[6px] bottom-1 h-px bg-white/80" />
        <div className="relative h-full bg-white overflow-hidden shadow-[0_0_0_1px_#5b6b80,2px_2px_3px_1px_rgba(20,30,50,0.6)] [&_text]:fill-black">{children}</div>
      </button>
    </li>
  );
}

function SidePane() {
  return (
    <aside className="w-[290px] shrink-0 flex flex-col min-h-0">
      <div className="h-[21px] shrink-0 flex items-stretch bg-linear-to-b from-[#b3d0f5] to-[#8db4e6] border-b border-[#6f98cf] relative">
        <svg width="120" height="20" className="absolute left-0 top-0" aria-hidden="true">
          <path d="M50 20V5q0-4 4-4h36q4 0 6 3l12 16" fill="#a9c9f2" stroke="#5f8ac4" />
          <path d="M0 20V1h38q5 0 8 4l11 15" fill="#dcebfd" stroke="#5f8ac4" />
        </svg>
        <button className="relative pl-2 w-[59px] text-left font-bold text-[#0b2a6b]">Diák</button>
        <button className="relative text-[#15428b]">Vázlat</button>
        <button aria-label="Panel bezárása" className="ml-auto mr-2 self-center">
          <Icon w={7} h={7}><path d="M.5.5l6 6M6.500.5l-6 6" stroke="#3f68a8" strokeWidth="1.600" /></Icon>
        </button>
      </div>
      <div className="flex-1 min-h-0 flex">
        <ul className="flex-1 min-w-0 min-h-0 overflow-hidden flex flex-col gap-[3px] pt-[3px] pl-[3px]">
          <Thumb n={15}><DiagramSlide /></Thumb>
          <Thumb n={16}><TextSlide /></Thumb>
          <Thumb n={17} selected><CodeSlide page={17} small /></Thumb>
          <Thumb n={18}><CodeSlide page={18} small /></Thumb>
        </ul>
        <div className="w-4 border-l border-[#bcd3f0] bg-[#7c9cc8]/60 flex flex-col items-center">
          <Icon w={9} h={5} className="mt-[5px]"><path d="M0 5h9L4.500 0z" fill="#3b4f73" /></Icon>
          <div className="mt-[143px] h-[18px] w-[14px] rounded-[2px] border border-[#6d87ad] bg-[#dfe9f6] flex flex-col items-center justify-center gap-[2px]">
            <span className="w-2 h-px bg-[#6f7f98]" />
            <span className="w-2 h-px bg-[#6f7f98]" />
            <span className="w-2 h-px bg-[#6f7f98]" />
            <span className="w-2 h-px bg-[#6f7f98]" />
          </div>
          <Icon w={9} h={5} className="mt-auto mb-[5px]"><path d="M0 0h9L4.500 5z" fill="#3b4f73" /></Icon>
        </div>
      </div>
    </aside>
  );
}

function Workspace() {
  return (
    <div className="flex-1 min-h-0 relative flex bg-linear-to-b from-[#a5c4ec] via-[#547eb7] via-62% to-[#6893d1]">
      <svg className="absolute inset-0 w-full h-full" viewBox="0 0 1600 697" preserveAspectRatio="none" aria-hidden="true">
        <path d="M296 33Q380 8 470 0H296z" fill="#c8dbf4" opacity=".8" />
        <path d="M0 125Q60 90 275 60V20H0z" fill="#c8dbf4" opacity=".25" />
      </svg>
      <div className="relative flex w-full min-h-0">
        <SidePane />
        <div className="w-[5px] shrink-0 border-r border-[#5f88c2] bg-[#a9ccf8]" />
        <div className="flex-1 min-w-0 flex flex-col">
          <main className="flex-1 min-h-0 flex">
            <div className="flex-1 min-w-0 flex justify-center pt-[19px] overflow-hidden">
              <article className="w-[870px] h-[653px] shrink-0 bg-white shadow-[3px_3px_6px_rgba(20,40,80,0.7)]">
                <CodeSlide page={17} />
              </article>
            </div>
            <div className="w-[15px] shrink-0 flex flex-col items-center bg-[#a9c8f3]">
              <div className="flex-1 w-full flex flex-col items-center bg-linear-to-r from-[#7898c8] to-[#8eabd5]">
                <Icon w={9} h={5} className="mt-[6px]"><path d="M0 5h9L4.500 0z" fill="#3b4f73" /></Icon>
                <div className="mt-[156px] h-[9px] w-[14px] rounded-[2px] border border-[#6d87ad] bg-[#dfe9f6] flex flex-col items-center justify-center gap-px">
                  <span className="w-2 h-px bg-[#6f7f98]" />
                  <span className="w-2 h-px bg-[#6f7f98]" />
                </div>
                <Icon w={9} h={5} className="mt-auto mb-[10px]"><path d="M0 0h9L4.500 5z" fill="#3b4f73" /></Icon>
              </div>
              <button aria-label="Előző dia" className="mt-1"><Icon w={8} h={10}><path d="M0 4.500h8L4 .5zM0 9.500h8L4 5.500z" fill="#000" /></Icon></button>
              <button aria-label="Következő dia" className="mt-[6px] mb-[17px]"><Icon w={8} h={10}><path d="M0 .5h8L4 4.500zM0 5.500h8L4 9.500z" fill="#000" /></Icon></button>
            </div>
          </main>
          <div className="h-[7px] shrink-0 border-y border-[#dfeeff] border-b-[#4f79b4] bg-[#a3c8f8]" />
        </div>
      </div>
    </div>
  );
}

/* ---------- status bar, taskbar ---------- */

function StatusBar() {
  return (
    <footer className="h-[22px] shrink-0 flex items-stretch bg-linear-to-b from-[#dceafb] via-[#b6d1f5] via-45% to-[#d3e4fa] text-[#15316b]">
      <span className="w-[116px] pl-2 flex items-center border-r border-white/80">17, összesen 67 Dia</span>
      <span className="w-[102px] justify-center flex items-center border-r border-white/80">„Üres bemutató”</span>
      <span className="w-[55px] justify-center flex items-center border-r border-white/80">magyar</span>
      <div className="ml-auto w-[264px] pl-1 pr-1 flex items-center border-l border-[#5c83bd] bg-linear-to-b from-[#b9d3f6] via-[#84ade5] via-45% to-[#9fc2f1]">
        <div className="h-[18px] w-[57px] flex rounded-[2px] border border-[#eef5ff] bg-[#cfdff3] divide-x divide-[#eef5ff]">
          <button aria-label="Normál nézet" className="flex-1 flex items-center justify-center">
            <Icon w={11} h={10}><path d="M.5.5h10v9H.5zM3.500.5v9M5.500 3h3v3h-3z" stroke="#454b55" /></Icon>
          </button>
          <button aria-label="Diarendező nézet" className="flex-1 flex items-center justify-center">
            <Icon w={11} h={10}><path d="M.5.5h4v3h-4zM6.500.5h4v3h-4zM.5 6.500h4v3h-4zM6.500 6.500h4v3h-4z" stroke="#454b55" /></Icon>
          </button>
          <button aria-label="Vetítés" className="flex-1 flex items-center justify-center">
            <Icon w={11} h={10}><path d="M0 1h11M1.500 1v4.500h8V1M5.500 6v3M3 9.500h5" stroke="#454b55" strokeWidth="1.300" /></Icon>
          </button>
        </div>
        <span className="ml-[7px] w-6">91%</span>
        <button aria-label="Kicsinyítés" className="ml-[7px]">
          <Icon w={16} h={16}><circle cx="8" cy="8" r="7" fill="#dbe8f9" stroke="#5573a5" /><path d="M4 8h8" stroke="#4a5f85" strokeWidth="2" /></Icon>
        </button>
        <div className="relative flex-1 h-4 flex items-center">
          <span className="w-full h-px bg-[#eaf3ff] shadow-[0_-1px_0_#6c92c9]" />
          <input type="range" aria-label="Nagyítás" defaultValue={46} className="absolute inset-0 w-full opacity-0" />
          <Icon w={10} h={13} className="absolute left-[41px] top-[2px] pointer-events-none"><path d="M.5.5h9v7L5 12.500.5 7.500z" fill="#d5e4f8" stroke="#4b6799" /></Icon>
        </div>
        <button aria-label="Nagyítás">
          <Icon w={16} h={16}><circle cx="8" cy="8" r="7" fill="#dbe8f9" stroke="#5573a5" /><path d="M4 8h8M8 4v8" stroke="#4a5f85" strokeWidth="2" /></Icon>
        </button>
        <button aria-label="Ablakhoz igazítás" className="ml-[10px]">
          <Icon w={16} h={16}>
            <rect x=".5" y=".5" width="15" height="15" rx="2" fill="#e3edfa" stroke="#f6faff" />
            <path d="M2.500 2.500h11v11h-11z" stroke="#555" strokeDasharray="1 1.500" />
            <path d="M8 2.500v3M8 10.500v3M2.500 8h3M10.500 8h3" stroke="#444" strokeWidth="1.600" />
          </Icon>
        </button>
      </div>
    </footer>
  );
}

const apps: { name: string; open?: boolean; active?: boolean; icon: ReactNode }[] = [
  {
    name: 'Firefox',
    open: true,
    icon: (
      <Icon w={32} h={32}>
        <circle cx="17" cy="14" r="12" fill="#2f7fd0" />
        <path d="M13 4c5-3 10 0 12 3-3-1-5 0-6 2s-5 1-6-5z" fill="#8cc5f0" />
        <path d="M2 5c1 2 3 2 5 2 2-2 5-2 7-1-3 2-2 4 1 5-1 3-4 3-5 5 1 4 7 6 11 3s6-8 4-14c7 6 7 16 1 21S10 33 4 26C0 20 0 11 2 5z" fill="#e66a1f" />
        <path d="M27 8c4 7 2 15-3 18s-12 3-16-1c9 3 20-2 19-17z" fill="#f9c23c" />
        <path d="M2 12c-1 8 3 15 9 17-5-4-7-9-6-14z" fill="#b93d10" />
      </Icon>
    ),
  },
  {
    name: 'Lejátszó',
    icon: (
      <Icon w={32} h={32}>
        <circle cx="16" cy="16" r="15" fill="#63686e" />
        <path d="M18 20l12-3c0 6-4 11-9 13z" fill="#3d4248" />
        <path d="M2 10C7 1 18-1 26 4L9 6 7 17l-6-1z" fill="#d9583a" />
        <path d="M10 6h18l2 13-20 2q-2-8 0-15z" fill="#f0541d" stroke="#5b6066" />
        <path d="M12 8h15l1 5c-6-1-11 0-16 3z" fill="#ff9357" />
        <path d="M2 20l4 3 6-1 4 2-4 3 1 4C7 29 3 25 2 20z" fill="#ef3f1c" />
      </Icon>
    ),
  },
  {
    name: 'Intéző',
    open: true,
    icon: (
      <Icon w={32} h={30}>
        <path d="M1 4h4l1-2h6l1 2h4l1-1h5l1 2h6v22H1z" fill="#e8cf7c" stroke="#b99b4a" />
        <path d="M3 8h27v18H3z" fill="#f7e8ab" />
        <path d="M5 2h4v2H5z" fill="#25a243" /><path d="M13 4h4v2h-4z" fill="#cf3a2b" /><path d="M22 6h5v2h-5z" fill="#2f86d5" />
        <path d="M5 29V18q0-1 1-1h20q1 0 1 1v11h-5v-5H10v5z" fill="#a9dcef" stroke="#5fa8c6" />
      </Icon>
    ),
  },
  {
    name: 'Messenger',
    icon: (
      <Icon w={32} h={30}>
        <circle cx="11" cy="8" r="5" fill="#7fbf5a" /><path d="M4 28c0-9 2-14 7-14s7 5 7 14z" fill="#4f9f47" />
        <circle cx="21" cy="7" r="6" fill="#8fc4e6" /><path d="M13 28c0-9 2-14 8-14s8 5 8 14z" fill="#5a9fd2" />
        <path d="M0 15c6 5 16 6 31-1-6 10-20 12-27 5l-3-1z" fill="#f0ad3a" />
      </Icon>
    ),
  },
  {
    name: 'Total Commander kiegészítő',
    open: true,
    icon: (
      <Icon w={32} h={24}>
        <path d="M1 4h30l-3 7H4z" fill="#c4161c" />
        <path
          d="M1 10C1 16 5 21 11 21 8 17 7 14 9 11c2 1 3 4 4 7l3-3 3 3c1-3 2-6 4-7 2 3 1 6-2 10 6 0 10-5 10-11 0-3-1-5-3-7 1 3 1 5 0 8-2-3-4-4-7-3-1-3-2-5-5-8-3 3-4 5-5 8-3-1-5 0-7 3-1-3-1-5 0-8-2 2-4 4-4 7z"
          fill="#fcc72c"
          stroke="#7a4a05"
          strokeWidth=".7"
        />
      </Icon>
    ),
  },
  {
    name: 'Total Commander',
    icon: (
      <Icon w={32} h={32}>
        <path d="M1 1h28l2 2v28H1z" fill="#2733c9" stroke="#151d87" />
        <rect x="9" y="1" width="15" height="10" fill="#dfe3ef" /><rect x="18" y="2" width="4" height="8" fill="#2733c9" />
        <rect x="5" y="14" width="22" height="17" fill="#fff" />
        <path d="M6 18h20M6 22h20M6 26h20" stroke="#d23030" />
      </Icon>
    ),
  },
  {
    name: 'Photoshop',
    icon: <span className="mb-[5px] size-[30px] bg-linear-to-br from-[#2fa9f3] to-[#0b72c9] text-[#0a2744] font-bold text-[15px] leading-7 text-center">Ps</span>,
  },
  {
    name: 'LFS',
    icon: (
      <Icon w={32} h={32}>
        <rect x="1" y="1" width="30" height="30" rx="6" fill="#20252c" stroke="#7d8791" />
        <path d="M2 7q0-5 5-5h18q5 0 5 5v5L2 18z" fill="#5e6771" />
        <path d="M8 7L4 19h6" stroke="#f4d544" strokeWidth="2.600" />
        <path d="M21 6h-6l-4 15M14 12h5" stroke="#e9ecef" strokeWidth="2.400" />
        <path d="M27 10h-5l-2 6h5l-2 7h-6M22 10l-5 13M27 10l-2 6" stroke="#57b4f3" strokeWidth="2.400" />
      </Icon>
    ),
  },
  {
    name: 'Zöld 2',
    icon: (
      <Icon w={32} h={32}>
        <rect width="32" height="32" fill="#0c1a0b" />
        <circle cx="16" cy="16" r="14.500" stroke="#5fbf3f" strokeWidth="2" strokeDasharray="8 1" />
        <path d="M6 10q4-5 10-5 10 0 9 6-1 4-7 7h9l-1 7H5l1-5 10-7q3-2 0-3-3 0-4 3H6z" fill="#8fdc67" />
      </Icon>
    ),
  },
  {
    name: 'Narancs 2',
    icon: (
      <Icon w={32} h={32}>
        <rect width="32" height="32" fill="#1a1006" />
        <circle cx="16" cy="16" r="14.500" stroke="#c47a20" strokeWidth="2" strokeDasharray="8 1" />
        <path d="M6 10q4-5 10-5 10 0 9 6-1 4-7 7h9l-1 7H5l1-5 10-7q3-2 0-3-3 0-4 3H6z" fill="#e9a446" />
      </Icon>
    ),
  },
  {
    name: 'Counter-Strike',
    icon: (
      <Icon w={32} h={32}>
        <circle cx="16" cy="16" r="14" fill="#4f5fd0" />
        <path d="M2 16A14 14 0 0 1 30 16z" fill="#d8c868" />
        <circle cx="16" cy="16" r="11" fill="#fff" opacity=".75" />
        <path d="M13 3h4v4l3 1 8-2v2l-7 3-3 2-1 5 3 5 1 6h-3l-2-6-3-3-3 5-2 5H7l2-7 2-5-1-7z" fill="#0a0a0a" />
      </Icon>
    ),
  },
  {
    name: '42',
    icon: (
      <Icon w={34} h={32}>
        <path d="M19 6q3-5 8-4 4 2 1 7l-6 7h8l-1 4H16l1-4 7-9q0-2-2 0z" fill="#050505" />
        <path d="M5 17l3-3 3 3 5-3 1 5 4 3-4 4-5 5-5-1-7 1 3-4-4-2 4-2-3-3z" fill="#c3202a" />
        <path d="M12 17l-5 7h7M13 20v8" stroke="#fff" strokeWidth="2.400" />
      </Icon>
    ),
  },
  {
    name: 'µTorrent',
    icon: <span className="size-[31px] border-2 border-[#d9e5ee] bg-linear-to-b from-[#43b649] to-[#0e8f1c] text-white font-bold text-[23px] leading-6 text-center">µ</span>,
  },
  {
    name: 'Fraps',
    icon: (
      <Icon w={32} h={30} className="mb-1">
        <path d="M4 4l26-3-5 22-24-3z" fill="#c9ccd0" /><path d="M6 6l21-3-4 17-19-2z" fill="#3a434d" />
        <ellipse cx="15" cy="27" rx="9" ry="3" fill="#0a0b0d" />
        <rect x="1" y="0" width="15" height="12" fill="#111" />
        <text x="1" y="10" fontSize="12" fontWeight="700" fill="#fff200" fontFamily="Liberation Mono">99</text>
      </Icon>
    ),
  },
  {
    name: 'PowerPoint',
    active: true,
    icon: (
      <Icon w={32} h={32}>
        <path d="M7 2h19l2 22H2V8z" fill="#fde6da" stroke="#e05a22" strokeWidth="1.500" />
        <path d="M4 8l27 1-1 22-24-2z" fill="#f6f2ee" />
        <path d="M8 11l19 1v14l-18-1z" fill="#de4b1c" />
        <path d="M10 14h5v2h-5zM10 18h5v2h-5zM10 22h5v1h-5z" fill="#fff" />
        <path d="M21 18v-4a4.500 4.500 0 1 0 4 5z" fill="#fff" /><path d="M22 13a4 4 0 0 1 3 4h-3z" fill="#fff" />
      </Icon>
    ),
  },
];

function Taskbar() {
  return (
    <nav aria-label="Tálca" className="h-[39px] shrink-0 flex items-center border-t border-[#5b6672] bg-linear-to-b from-[#2b3643] via-[#19222c] via-15% to-[#1b242e] text-white">
      <button aria-label="Start" className="w-[58px] flex justify-center">
        <span className="-ml-1 size-[36px] rounded-full border border-[#7fa7c4] bg-radial-[at_50%_85%] from-[#35d0f5] via-[#1c6aa5] via-50% to-[#5f8fae] flex items-center justify-center">
          <Icon w={22} h={22}>
            <path d="M2 4c3-2 5-2 8 0L9 11c-3-2-5-2-8 0z" fill="#e8562c" />
            <path d="M11 4c3 2 6 2 9 0l-1 7c-3 2-6 2-9 0z" fill="#8cc63e" />
            <path d="M1 12c3-2 5-2 8 0l-1 7c-3-2-5-2-8 0z" fill="#3f97e3" />
            <path d="M10 12c3 2 6 2 9 0l-1 7c-3 2-6 2-9 0z" fill="#fbc92f" />
          </Icon>
        </span>
      </button>
      {apps.map((a) => (
        <button
          key={a.name}
          aria-label={a.name}
          className={`mx-[2px] w-[58px] h-[38px] flex items-center justify-center rounded-[3px] border ${
            a.active
              ? 'border-[#d9dcdf] bg-linear-to-br from-[#dfe0e2] via-[#8d9093] via-55% to-[#b3b6b8]'
              : a.open
                ? 'border-[#8a9096] bg-linear-to-br from-[#9a9ea2] via-[#50565d] via-40% to-[#31383f]'
                : 'border-transparent'
          }`}
        >
          {a.icon}
        </button>
      ))}
      <div className="ml-auto flex items-center h-full">
        <Icon w={8} h={5} className="mr-[14px]"><path d="M0 5h8L4 0z" fill="#fff" /></Icon>
        <Icon w={16} h={18} className="mr-[8px]">
          <circle cx="6" cy="5" r="4" fill="#a7cfe8" /><path d="M0 17c0-6 2-8 6-8s6 2 6 8z" fill="#6fa8d0" />
          <rect x="7.500" y="9.500" width="8" height="8" rx="1.500" fill="#d8322b" stroke="#f6c4c0" />
        </Icon>
        <Icon w={12} h={16} className="mr-[14px]">
          <rect x="4" width="5" height="4" fill="#e8b27a" /><path d="M1 4h10v6H1z" fill="#2f9e3c" /><path d="M4 9h4v7H4z" fill="#2e61c2" /><path d="M1 8h2v3H1zM9 8h2v3H9z" fill="#f2d66c" />
        </Icon>
        <Icon w={12} h={16} className="mr-[10px]">
          <rect width="12" height="16" rx="5" fill="#0f4fa0" />
          <path d="M3 5l6 6-3 3V2l3 3-6 6" stroke="#fff" strokeWidth="1.300" />
        </Icon>
        <Icon w={15} h={15} className="mr-[10px]">
          <path d="M1 0v15" stroke="#fff" strokeWidth="1.500" /><path d="M2 1h6v2l6 1-1 5-4-1-1-1H2z" fill="#fff" />
        </Icon>
        <Icon w={14} h={16} className="mr-[11px]">
          <rect x="1" y="1.500" width="7" height="13" stroke="#fff" strokeWidth="1.800" />
          <path d="M6 5h8v3q0 3-3 3v4H9v-4q-3 0-3-3z" fill="#fff" stroke="#19222c" strokeWidth=".8" />
          <path d="M8 2v3M12 2v3" stroke="#fff" strokeWidth="1.500" />
        </Icon>
        <Icon w={14} h={13} className="mr-[9px]">
          <path d="M0 11h2v2H0zM3 9h2v4H3zM6 6h2v7H6zM9 3h2v10H9z" fill="#fff" /><path d="M12 0h2v13h-2z" fill="#6c747c" />
        </Icon>
        <Icon w={16} h={15} className="mr-[18px]">
          <path d="M0 5h3l5-4v13L3 10H0z" fill="#fff" /><circle cx="11" cy="10" r="4.500" fill="#d8322b" stroke="#fff" /><path d="M8 7l6 6" stroke="#fff" strokeWidth="1.500" />
        </Icon>
        <time className="text-center text-[12px] leading-[17px] w-[58px] whitespace-nowrap">17:19<br />2009.11.30.</time>
        <button aria-label="Asztal megjelenítése" className="ml-3 w-[14px] h-full border border-[#6c757e] bg-linear-to-b from-[#747d86] via-[#2f3840] via-50% to-[#1b232b]" />
      </div>
    </nav>
  );
}

export default function App() {
  return (
    <div className="h-screen flex flex-col overflow-hidden font-['Open_Sans','Noto_Sans',sans-serif] text-[11px] leading-[14px]">
      <TitleBar />
      <RibbonTabs />
      <div className="h-[92px] shrink-0 bg-[#a9c6ea] px-px pb-[3px]">
        <div className="h-[89px] flex gap-[3px] px-1 pt-[2px] rounded-[3px] border-t border-b border-t-[#8db2e3] border-b-[#a8e6f4] bg-linear-to-b from-[#dce7f3] via-[#c8daee] via-30% to-[#dcf2fd]">
          <ClipboardGroup />
          <SlidesGroup />
          <FontGroup />
          <ParagraphGroup />
          <DrawingGroup />
          <EditingGroup />
        </div>
      </div>
      <Workspace />
      <StatusBar />
      <Taskbar />
    </div>
  );
}
